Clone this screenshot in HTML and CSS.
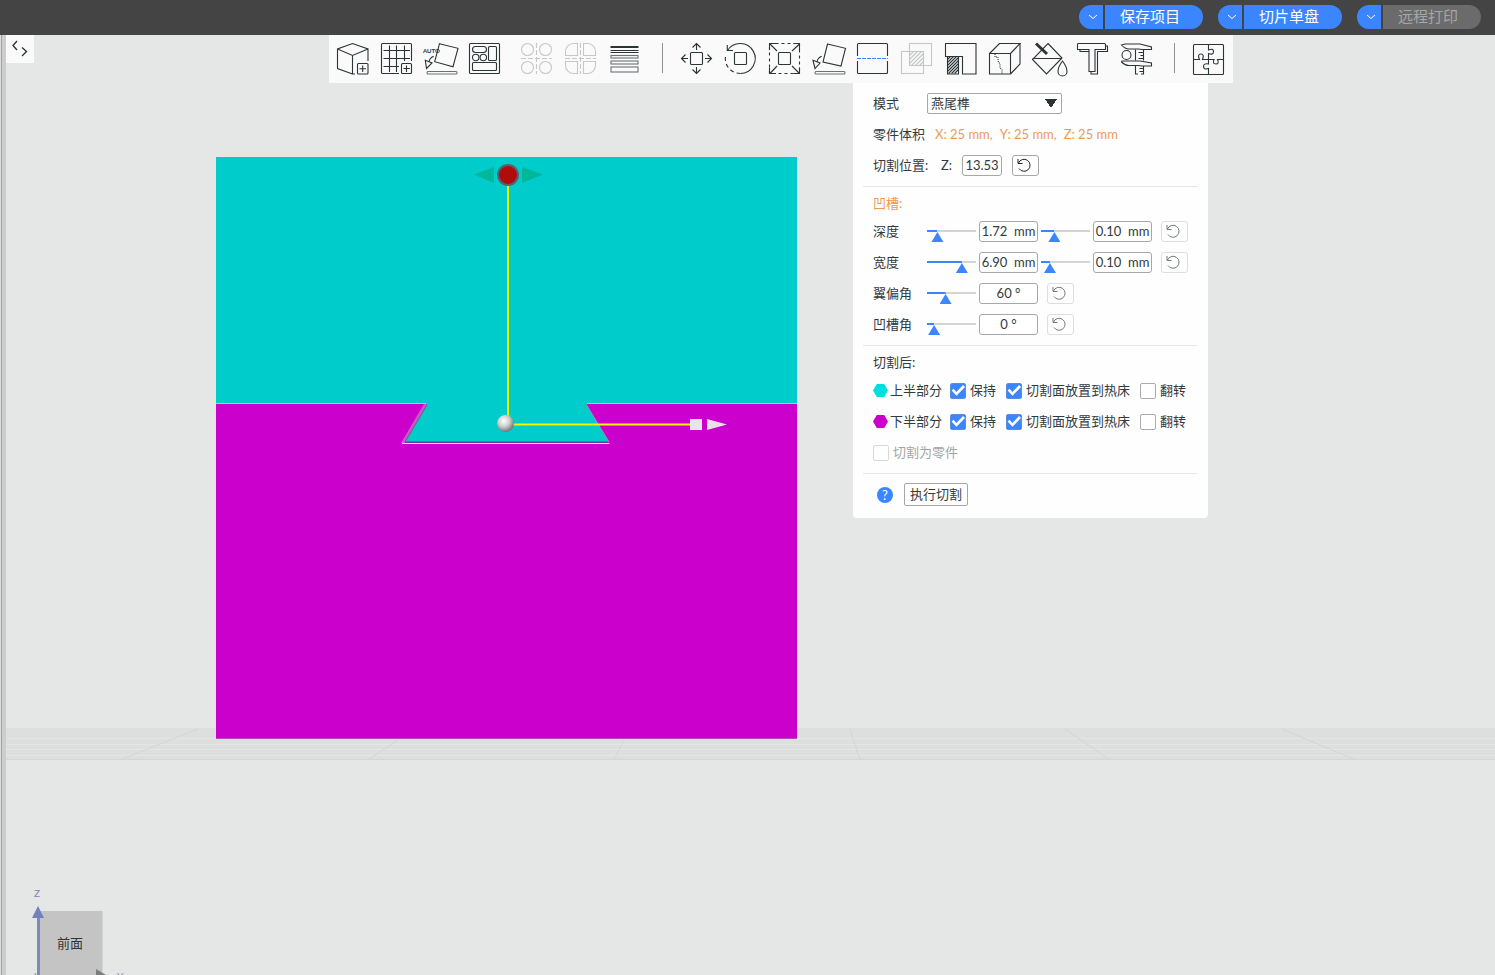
FILE: index.html
```html
<!DOCTYPE html>
<html lang="zh-CN">
<head>
  <meta charset="UTF-8">
  <meta name="viewport" content="width=device-width, initial-scale=1.0">
  <title>切割 - 燕尾榫</title>
  <link rel="stylesheet" href="styles.css">
</head>
<body>
  <header class="topbar">
    <div class="split-btn">
      <button class="split-arrow" aria-label="保存选项"><svg viewBox="0 0 10 6"><path d="M1 1L5 4.500L9 1"/></svg></button>
      <button class="split-main">保存项目</button>
    </div>
    <div class="split-btn">
      <button class="split-arrow" aria-label="切片选项"><svg viewBox="0 0 10 6"><path d="M1 1L5 4.500L9 1"/></svg></button>
      <button class="split-main">切片单盘</button>
    </div>
    <div class="split-btn">
      <button class="split-arrow" aria-label="打印选项"><svg viewBox="0 0 10 6"><path d="M1 1L5 4.500L9 1"/></svg></button>
      <button class="split-main" disabled>远程打印</button>
    </div>
  </header>

  <main class="workspace">
    <!-- 3D 视图 -->
    <svg class="scene" viewBox="6 35 1489 940" preserveAspectRatio="xMidYMid slice">
      <defs>
        <radialGradient id="ball" cx="0.4" cy="0.35" r="0.65">
          <stop offset="0" stop-color="#fff"/>
          <stop offset="0.5" stop-color="#d0d0d0"/>
          <stop offset="1" stop-color="#777"/>
        </radialGradient>
      </defs>

      <!-- 热床网格 -->
      <rect x="6" y="728" width="1489" height="32" fill="#dddfde"/>
      <path d="M6 738.500H1495M6 744.500H1495M6 749.500H1495M6 755.500H1495" stroke="#e4e6e5"/>
      <path d="M198 729L120 760M398 740L368 760M624 740L614 760M850 729L860 760M1065 729L1110 760M1282 729L1356 760M6 759.500H1495" stroke="#d4d6d5" fill="none"/>

      <!-- 零件 -->
      <rect x="216" y="157" width="581" height="582" fill="#c0c"/>
      <path d="M216 157H797V404H586L609 442H405L427 404H216Z" fill="#0cc"/>
      <path d="M216 403.500H426M587 403.500H797" stroke="#a9c4e8"/>
      <path d="M424 404H427L405 443H401Z" fill="#cc55cc"/>
      <path d="M427 405L405 442" stroke="#667"/>
      <path d="M586 404L609 442" stroke="#8a9bb0"/>
      <path d="M405 442H608" stroke="#176d70"/>
      <path d="M402 443.500H609.500" stroke="#efd5ef"/>
      <path d="M216 738.500H797" stroke="#b84cb8"/>

      <!-- 操纵杆 -->
      <path d="M508 185V424M505 424.500H691" stroke="#f5f500" stroke-width="2"/>
      <path d="M474 174.500L494 167V183Z M543 174.500L522 167V183Z" fill="#00b69b"/>
      <circle cx="508" cy="175" r="10" fill="#b00c0c" stroke="#59616a" stroke-width="2"/>
      <circle cx="505.500" cy="423.500" r="8.500" fill="url(#ball)"/>
      <rect x="690" y="419" width="12" height="11" fill="#e6e6e6"/>
      <path d="M707 419L727 424.500L707 430Z" fill="#e8e2e8"/>

      <!-- 视角立方体 -->
      <rect x="40" y="911" width="62.500" height="66" fill="#c4c4c4"/>
      <path d="M38.500 917V980" stroke="#7b8abd" stroke-width="3"/>
      <path d="M38 906L44 918H32Z" fill="#7281bb"/>
      <path d="M96 969L106 975H96Z" fill="#7c7c7c"/>
      <text x="34" y="897" class="axis axis-z">Z</text>
      <text x="117" y="980" class="axis">Y</text>
      <text x="34" y="980" class="axis">X</text>
      <text x="57" y="948" class="face">前面</text>
    </svg>

    <button class="collapse" aria-label="折叠侧栏">
      <svg viewBox="0 0 16 16"><path d="M5 0L1 4.500L5 9M10 6.500L14.500 10.500L10 15"/></svg>
    </button>

    <div class="tools">
      <nav class="toolbar">
        <button aria-label="添加模型"><svg class="icon" viewBox="0 0 32 32"><path d="M15.500 31L.5 25.500V6L15.500 .5L31 6V18M.5 6L15.500 12.500L31 6M15.500 12.500V31H18"/><rect x="20.500" y="20.500" width="10.500" height="10.500" rx="1"/><path d="M25.700 22.500V29M22.500 25.700H29"/></svg></button>
        <button aria-label="添加盘"><svg class="icon" viewBox="0 0 32 32"><path d="M18 30.500H1.500Q.5 30.500 .5 29.500V1.500Q.5 .5 1.500 .5H29.500Q30.500 .5 30.500 1.500V18M8.500 2.500V29M15.500 2.500V29M23.500 2.500V18M2.500 7.500H29M2.500 15.500H29M2.500 23.500H18"/><rect x="20.500" y="20.500" width="10" height="10" rx="1"/><path d="M25.500 22.500V29M22.500 25.500H29"/></svg></button>
        <button aria-label="自动朝向"><svg class="icon" viewBox="0 0 32 32"><path d="M14.500 .7L33 5.300L28 23.700L9.700 18.700ZM8.700 13.300Q4.500 15 4 19M.3 17.300L7 20L1.500 25.500Z"/><rect x="2" y="28.500" width="30" height="2.500" rx="1" class="soft"/><text x="-2" y="10">AUTO</text></svg></button>
        <button aria-label="整理"><svg class="icon" viewBox="0 0 32 32"><rect x=".5" y=".5" width="30" height="30" rx="1"/><rect x="3.500" y="3.500" width="14" height="6" rx="3"/><rect x="19.500" y="3.500" width="8" height="14" rx="1"/><circle cx="6.700" cy="14.500" r="3.200"/><circle cx="14.300" cy="14.500" r="3.200"/><rect x="3.500" y="19.500" width="24" height="8" rx="1"/></svg></button>
        <button class="group-start" aria-label="拆分为对象" disabled><svg class="icon" viewBox="0 0 32 32"><circle cx="6.500" cy="6.500" r="6"/><circle cx="24.500" cy="6.500" r="6"/><circle cx="6.500" cy="24.500" r="6"/><circle cx="24.500" cy="24.500" r="6"/><path d="M15.500 0V31M0 15.500H31" stroke-dasharray="5 2"/></svg></button>
        <button aria-label="拆分为零件" disabled><svg class="icon" viewBox="0 0 32 32"><path d="M12.500 .5V12.500H.5V8.500A8 8 0 0 1 8.500 .5ZM18.500 .5V12.500H30.500V8.500A8 8 0 0 0 22.500 .5ZM12.500 30.500V18.500H.5V22.500A8 8 0 0 0 8.500 30.500ZM18.500 30.500V18.500H30.500V22.500A8 8 0 0 1 22.500 30.500Z"/><path d="M15.500 0V31M0 15.500H31" stroke-dasharray="5 2"/></svg></button>
        <button aria-label="可变层高"><svg class="icon" viewBox="0 0 32 32"><path d="M1.500 4H29.500" stroke-width="2"/><path d="M1.500 7.500H29.500M1.500 9.500H29.500"/><g class="soft"><rect x="2" y="12.500" width="27" height="2.500"/><rect x="2" y="18" width="27" height="3"/><rect x="2" y="24" width="27" height="5"/></g></svg></button>
        <span class="sep"></span>
        <button aria-label="移动"><svg class="icon" viewBox="0 0 32 32"><rect x="9.500" y="9.500" width="12" height="12" rx="1"/><path d="M15.500 7V.5M11.500 4.500L15.500 .5L19.500 4.500M15.500 24V30.500M11.500 26.500L15.500 30.500L19.500 26.500M7 15.500H.5M4.500 11.500L.5 15.500L4.500 19.500M24 15.500H30.500M26.500 11.500L30.500 15.500L26.500 19.500"/></svg></button>
        <button aria-label="旋转"><svg class="icon" viewBox="0 0 32 32"><rect x="9.500" y="9.500" width="12" height="12" rx="1"/><path d="M2.500 7.500A15 15 0 1 1 15.500 30.500M2.300 2V7.500H8"/><path d="M15.500 30.500A15 15 0 0 1 .5 13" stroke-dasharray="4 3"/></svg></button>
        <button aria-label="缩放"><svg class="icon" viewBox="0 0 32 32"><rect x="9.500" y="9.500" width="12" height="12" rx="1"/><rect x=".5" y=".5" width="30" height="30" stroke-dasharray="3 3"/><path d="M8 8L1 1M.5 7V.5H7M23 8L30.500 1M24.500 .5H30.500V7M8 23L1 30.500M.5 24.500V30.500H7M23 23L30.500 30.500M24.500 30.500H30.500V24.500"/></svg></button>
        <button aria-label="放置底面"><svg class="icon" viewBox="0 0 32 32"><path d="M14.500 1L32.500 5.300L28 23L10 19ZM8.700 13.300Q4.500 15 4 19M0 17.300L7 20L2 25.500Z"/><rect x="2" y="28.500" width="30" height="2.500" rx="1" class="soft"/></svg></button>
        <button aria-label="切割" aria-expanded="true"><svg class="icon" viewBox="0 0 32 32"><path d="M.5 13V1.500Q.5 .5 1.500 .5H29.500Q30.500 .5 30.500 1.500V13M.5 18V29.500Q.5 30.500 1.500 30.500H29.500Q30.500 30.500 30.500 29.500V18"/><path d="M0 15.500H31" class="accent" stroke-dasharray="4 1"/></svg></button>
        <button aria-label="布尔运算" disabled><svg class="icon" viewBox="0 0 32 32"><rect x="8.500" y=".5" width="22" height="22"/><rect x=".5" y="8.500" width="22" height="22"/><path d="M8.500 12.500L12.500 8.500M8.500 16.500L16.500 8.500M8.500 20.500L20.500 8.500M10.500 22.500L22.500 10.500M14.500 22.500L22.500 14.500M18.500 22.500L22.500 18.500"/></svg></button>
        <button aria-label="支撑绘制"><svg class="icon" viewBox="0 0 32 32"><path d="M.5 .5H31V31H17.500V13.500H.5ZM2.500 13.500H13.500V31H2.500Z"/><path d="M2.500 16.500L5.500 13.500M2.500 19.500L8.500 13.500M2.500 22.500L11.500 13.500M2.500 25.500L13.500 14.500M2.500 28.500L13.500 17.500M3.500 30.500L13.500 20.500M6.500 30.500L13.500 23.500M9.500 30.500L13.500 26.500"/></svg></button>
        <button aria-label="接缝绘制"><svg class="icon" viewBox="0 0 32 32"><path d="M.5 10.500H21.500V31H.5ZM.5 10.500L10.500 .5H31L21.500 10.500M31 .5V21L21.500 31"/><path d="M6 11V14H9V18L11 21V25L13 27V31" stroke-dasharray="1 1"/></svg></button>
        <button aria-label="颜色绘制"><svg class="icon" viewBox="0 0 32 32"><path d="M15 .5L29 15L13.500 31L-.5 16.500ZM-.5 15.500H29"/><path d="M3 .5L14 11" stroke-width="3"/><path d="M29.500 18Q34 24 34 28.500A4.500 4.500 0 0 1 25 28.500Q25 24 29.500 18Z" class="solid"/></svg></button>
        <button aria-label="文字浮雕"><svg class="icon" viewBox="0 0 32 32"><path d="M1 .5H27.500Q28.500 .5 28.500 1.500V6.500H18V28.500H12V6.500H.5V1.500Q.5 .5 1 .5ZM28.500 3H30.500V8.500H20.500V31H14V28.500M3 6.500V8.500H12"/></svg></button>
        <button aria-label="测量"><svg class="icon" viewBox="0 0 32 32"><path d="M4 1H19L30.500 4V6.500H21L17 6H8Q4 6 .5 2ZM1 18H19L30.500 20V23H21L17 22.500H8Q4 22.500 .5 19Z"/><circle cx="5.500" cy="12" r="4.500"/><path d="M14.500 6.500V17.500M22.500 6.500V17.500M14.500 23V31H17M22.500 23V31H20M17.500 9.500H22M19.500 12.500H22M17.500 15.500H22M18.500 25.500H22M18.500 28.500H22"/></svg></button>
        <span class="sep"></span>
        <button aria-label="装配视图"><svg class="icon" viewBox="0 0 32 32"><rect x=".5" y="1.500" width="30" height="30" rx="1"/><path d="M15.500 1V7Q20.500 5 20.500 8.500Q20.500 12.500 15.500 10.500V21Q10.500 20 10.500 23.500Q10.500 27 15.500 25.500V31M.5 16.500H6.500Q4 11 8 11Q11.500 11 9.500 16.500H21Q19 21 23 21Q26.500 21 24.500 16.500H30.500"/></svg></button>
      </nav>

      <section class="cut-panel">
        <div class="section">
          <div class="row">
            <label class="name" for="mode">模式</label>
            <select id="mode"><option>燕尾榫</option></select>
          </div>
          <div class="row">
            <span class="name size-name">零件体积</span>
            <span class="size"><span>X: 25 mm,</span><span>Y: 25 mm,</span><span>Z: 25 mm</span></span>
          </div>
          <div class="row">
            <span class="name pos-name">切割位置:</span>
            <label class="pos-axis" for="pos-z">Z:</label>
            <input class="num short" type="text" id="pos-z" value="13.53">
            <button class="reset strong" aria-label="重置位置"><svg viewBox="0 0 16 16"><path d="M2 2V6.500H6.500M2.500 6A6 6 0 1 1 3 11.500"/></svg></button>
          </div>
        </div>

        <div class="section">
          <h2 class="title orange">凹槽:</h2>
          <div class="row sliders">
            <label class="name" for="depth">深度</label>
            <input type="range" id="depth" value="12" style="--pos: 0.12">
            <input class="num" type="text" value="1.72  mm" aria-label="深度值">
            <input type="range" value="20" style="--pos: 0.20" aria-label="深度公差">
            <input class="num" type="text" value="0.10  mm" aria-label="深度公差值">
            <button class="reset" aria-label="重置深度"><svg viewBox="0 0 16 16"><path d="M2 2V6.500H6.500M2.500 6A6 6 0 1 1 3 11.500"/></svg></button>
          </div>
          <div class="row sliders">
            <label class="name" for="width">宽度</label>
            <input type="range" id="width" value="78" style="--pos: 0.78">
            <input class="num" type="text" value="6.90  mm" aria-label="宽度值">
            <input type="range" value="8" style="--pos: 0.08" aria-label="宽度公差">
            <input class="num" type="text" value="0.10  mm" aria-label="宽度公差值">
            <button class="reset" aria-label="重置宽度"><svg viewBox="0 0 16 16"><path d="M2 2V6.500H6.500M2.500 6A6 6 0 1 1 3 11.500"/></svg></button>
          </div>
          <div class="row sliders">
            <label class="name" for="flap">翼偏角</label>
            <input type="range" id="flap" value="34" style="--pos: 0.34">
            <input class="num" type="text" value="60 °" aria-label="翼偏角值">
            <button class="reset" aria-label="重置翼偏角"><svg viewBox="0 0 16 16"><path d="M2 2V6.500H6.500M2.500 6A6 6 0 1 1 3 11.500"/></svg></button>
          </div>
          <div class="row sliders">
            <label class="name" for="groove">凹槽角</label>
            <input type="range" id="groove" value="3" style="--pos: 0.03">
            <input class="num" type="text" value="0 °" aria-label="凹槽角值">
            <button class="reset" aria-label="重置凹槽角"><svg viewBox="0 0 16 16"><path d="M2 2V6.500H6.500M2.500 6A6 6 0 1 1 3 11.500"/></svg></button>
          </div>
        </div>

        <div class="section">
          <h2 class="title">切割后:</h2>
          <div class="row checks">
            <span class="part"><i class="hex upper"></i><span>上半部分</span></span>
            <label class="check"><input type="checkbox" checked><span>保持</span></label>
            <label class="check"><input type="checkbox" checked><span>切割面放置到热床</span></label>
            <label class="check"><input type="checkbox"><span>翻转</span></label>
          </div>
          <div class="row checks">
            <span class="part"><i class="hex lower"></i><span>下半部分</span></span>
            <label class="check"><input type="checkbox" checked><span>保持</span></label>
            <label class="check"><input type="checkbox" checked><span>切割面放置到热床</span></label>
            <label class="check"><input type="checkbox"><span>翻转</span></label>
          </div>
          <div class="row">
            <label class="check off"><input type="checkbox" disabled><span>切割为零件</span></label>
          </div>
        </div>

        <div class="section footer">
          <div class="row">
            <button class="help" aria-label="帮助">?</button>
            <button class="perform">执行切割</button>
          </div>
        </div>
      </section>
    </div>
  </main>
</body>
</html>
```

FILE: styles.css
```css
* {
  box-sizing: border-box;
}
body {
  margin: 0;
  min-height: 100vh;
  display: flex;
  flex-direction: column;
  font-family: Lato, "Noto Sans CJK SC", sans-serif;
  font-size: 13px;
  color: #323a3d;
}
button,
input,
select {
  font: inherit;
  color: inherit;
  margin: 0;
}
button {
  padding: 0;
  border: none;
  background: none;
  cursor: pointer;
}

/* Top bar */
.topbar {
  display: flex;
  justify-content: flex-end;
  align-items: center;
  gap: 15px;
  height: 35px;
  padding: 0 14px 1px 0;
  background: #434443;
}
.split-btn {
  display: flex;
  gap: 2px;
  height: 24px;
}
.split-btn button {
  background: #3b86ff;
  color: #fff;
}
.split-btn .split-arrow {
  width: 24px;
  padding-left: 4px;
  border-radius: 12px 0 0 12px;
}
.split-arrow svg {
  display: block;
  width: 10px;
  height: 6px;
  margin: 0 auto;
  fill: none;
  stroke: #fff;
}
.split-btn .split-main {
  width: 98px;
  padding: 0 8px 2px 0;
  border-radius: 0 12px 12px 0;
  font-size: 15px;
  line-height: 22px;
}
.split-btn .split-main:disabled {
  background: #6b6b6b;
  color: #a3a8a8;
}

/* Workspace */
.workspace {
  position: relative;
  flex: 1;
  display: flex;
  align-items: flex-start;
  padding-left: 6px;
  /* splitter between the side bar and the view */
  background: linear-gradient(to right, #dcdcdc 1px, #a4a4a4 1px, #a4a4a4 2px, #cdcdcd 2px, #cdcdcd 6px, #e5e7e6 6px);
  overflow: hidden;
}
.scene {
  position: absolute;
  top: 0;
  left: 6px;
  width: calc(100% - 6px);
  height: 100%;
}
.scene .axis {
  font-size: 10px;
  fill: #8d8d94;
}
.scene .axis-z {
  fill: #8085bd;
}
.scene .face {
  font-size: 13px;
  fill: #2f3435;
}
.collapse {
  position: relative;
  width: 28px;
  height: 28px;
  background: #fafafa;
}
.collapse svg {
  display: block;
  width: 16px;
  height: 16px;
  margin: 0 auto;
  overflow: visible;
  fill: none;
  stroke: #2f3739;
  stroke-width: 1.4;
}

/* Toolbar */
.tools {
  position: relative;
  flex: 1;
  display: grid;
  grid-template-columns: 295fr 904px 262fr;
}
.toolbar {
  grid-column: 2;
  display: flex;
  gap: 12px;
  height: 48px;
  padding: 8px;
  background: #fafafa;
}
.toolbar button {
  width: 32px;
  height: 32px;
}
.toolbar .group-start {
  margin-left: 8px;
}
.sep {
  width: 1px;
  height: 30px;
  margin: 0 6px 0 9px;
  background: #8f9293;
}
.icon {
  display: block;
  width: 32px;
  height: 32px;
  overflow: visible;
  fill: none;
  stroke: #2b3437;
  stroke-width: 1.1;
}
.icon text {
  font-size: 6px;
  font-weight: bold;
  fill: #2b3437;
  stroke: none;
}
.icon .soft {
  stroke: #6c7274;
}
.icon .solid {
  fill: #fafafa;
}
.icon .accent {
  stroke: #3b86ff;
}
button:disabled {
  cursor: default;
}
button:disabled .icon {
  stroke: #c6c8c8;
}

/* Cut panel */
.cut-panel {
  grid-column: 2;
  width: 355px;
  margin-left: 524px;
  padding: 5px 10px 8px;
  background: #fefefe;
  border-radius: 0 0 4px 4px;
}
.section {
  padding: 0 10px 5px;
}
.section + .section {
  padding-top: 3px;
  border-top: 1px solid #e6e6e6;
}
.section.footer {
  padding-bottom: 0;
}
.section + .footer {
  padding-top: 5px;
}
.row {
  display: flex;
  align-items: center;
  height: 31px;
  white-space: nowrap;
}
.title {
  margin: 0;
  font-size: 13px;
  font-weight: normal;
  line-height: 26px;
}
.name {
  width: 54px;
}
.name,
.size,
.pos-axis,
.part span {
  padding-bottom: 2px;
}
.orange,
.size {
  color: #ec9b57;
}
.size-name {
  width: 62px;
}
.size {
  display: flex;
  gap: 7px;
}
.pos-name {
  width: 68px;
}
.pos-axis {
  width: 21px;
}
select {
  appearance: none;
  width: 135px;
  height: 21px;
  padding: 0 3px 1px;
  border: 1px solid #a5a8aa;
  border-radius: 2px;
  line-height: 18px;
  /* dropdown triangle */
  background:
    linear-gradient(to bottom right, #2b3437 50%, transparent 51%) right 4px center / 6px 9px no-repeat,
    linear-gradient(to bottom left, #2b3437 50%, transparent 51%) right 10px center / 6px 9px no-repeat,
    #fff;
}
.num {
  width: 59px;
  height: 21px;
  padding: 0 0 2px;
  border: 1px solid #a5a8aa;
  border-radius: 3px;
  background: #fff;
  text-align: center;
}
.num.short {
  width: 40px;
}
.reset {
  width: 27px;
  height: 21px;
  border: 1px solid #dcdedf;
  border-radius: 3px;
}
.reset svg {
  display: block;
  width: 16px;
  height: 16px;
  margin: 0 0 1px 3px;
  fill: none;
  stroke: #747a7c;
}
.reset.strong {
  margin-left: 10px;
  border-color: #a5a8aa;
}
.reset.strong svg {
  stroke: #2b2024;
}
.sliders {
  gap: 3px;
}
.sliders .name {
  width: 51px;
}
.sliders .reset {
  margin-left: 6px;
}
input[type="range"] {
  appearance: none;
  width: 49px;
  height: 21px;
  background:
    linear-gradient(#3b86ff, #3b86ff) 0 9px / calc(6px + (100% - 12px) * var(--pos)) 2px no-repeat,
    linear-gradient(#d3d5d5, #d3d5d5) 0 9px / 100% 2px no-repeat;
}
input[type="range"]::-webkit-slider-runnable-track {
  height: 21px;
}
input[type="range"]::-webkit-slider-thumb {
  appearance: none;
  width: 12px;
  height: 10px;
  margin-top: 11px;
  background: #3b86ff;
  clip-path: polygon(50% 0, 100% 100%, 0 100%);
}

/* Check boxes */
.checks {
  gap: 10px;
}
.part {
  display: flex;
  align-items: center;
  gap: 2px;
  margin-right: -2px;
}
.hex {
  width: 15px;
  height: 13px;
  clip-path: polygon(25% 0, 75% 0, 100% 50%, 75% 100%, 25% 100%, 0 50%);
}
.upper {
  background: #00dede;
}
.lower {
  background: #c0c;
}
.check {
  display: flex;
  align-items: center;
  gap: 4px;
}
.check span {
  padding-bottom: 3px;
}
.check input {
  appearance: none;
  width: 16px;
  height: 16px;
  border: 1px solid #a9abad;
  border-radius: 2px;
  background: #fff;
}
.check input:checked {
  display: grid;
  place-items: center;
  border-color: #5c8ee0;
  background: #3b86ff;
}
.check input:checked::before {
  content: "";
  width: 14px;
  height: 12px;
  background: #fff;
  clip-path: polygon(4% 50%, 18% 36%, 38% 62%, 86% 5%, 100% 20%, 39% 94%);
}
.check.off {
  color: #a3a5a6;
}
.check.off input {
  border-color: #d6d8d9;
}
.help {
  width: 16px;
  height: 16px;
  margin: 0 11px 0 4px;
  border-radius: 50%;
  background: #3b86ff;
  color: #fff;
  line-height: 16px;
}
.perform {
  width: 64px;
  height: 23px;
  padding-bottom: 2px;
  border: 1px solid #a5a8aa;
  border-radius: 2px;
  background: #fff;
}
```
